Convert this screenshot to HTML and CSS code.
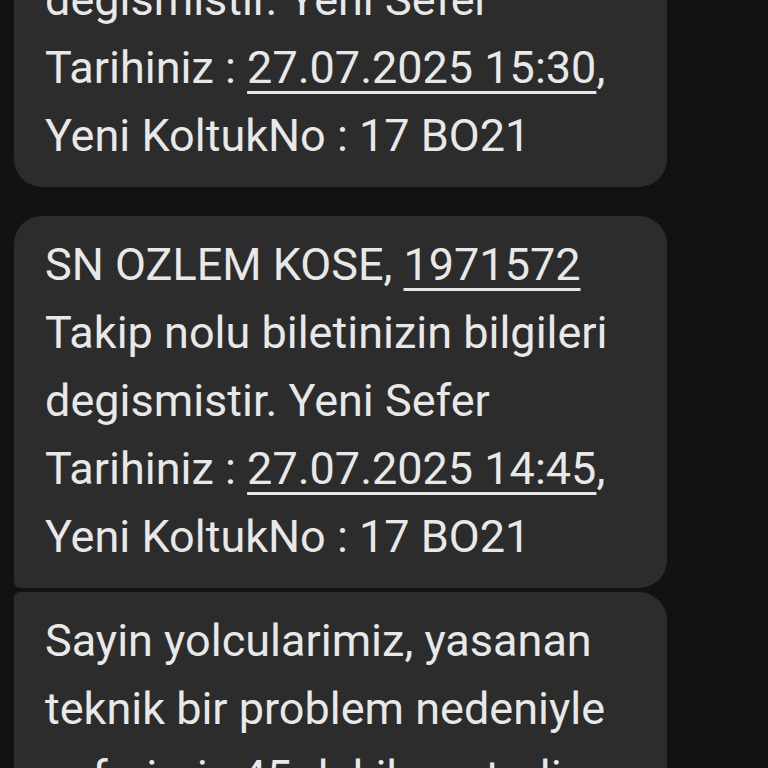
FILE: index.html
```html
<!DOCTYPE html>
<html lang="tr">
<head>
    <meta charset="UTF-8">
    <meta name="viewport" content="width=device-width, initial-scale=1.0">
    <title>Mesajlar</title>
    <link rel="stylesheet" href="styles.css">
</head>
<body>

    <div class="thread">
        <div class="message single">
            SN OZLEM KOSE, <a class="link">1971572</a><br>
            Takip nolu biletinizin bilgileri<br>
            degismistir. Yeni Sefer<br>
            Tarihiniz : <a class="link">27.07.2025 15:30</a>,<br>
            Yeni KoltukNo : 17 BO21
        </div>

        <div class="message first">
            SN OZLEM KOSE, <a class="link">1971572</a><br>
            Takip nolu biletinizin bilgileri<br>
            degismistir. Yeni Sefer<br>
            Tarihiniz : <a class="link">27.07.2025 14:45</a>,<br>
            Yeni KoltukNo : 17 BO21
        </div>

        <div class="message last">
            Sayin yolcularimiz, yasanan<br>
            teknik bir problem nedeniyle<br>
            seferimiz 45 dakika rotarli<br>
            olarak hareket edecektir.
        </div>
    </div>

</body>
</html>
```

FILE: styles.css
```css
body {
    font-family: Roboto, "Noto Sans", Arial, sans-serif;
    background-color: #121212;
    color: #e8e8e8;
    margin: 0;
    padding: 0 14px;
    height: 768px;
    overflow: hidden;
}
.thread {
    margin-top: -185px;
    display: flex;
    flex-direction: column;
}
.message {
    width: 653px;
    box-sizing: border-box;
    background-color: #2c2c2c;
    padding: 15px 20px 17px 31px;
    font-size: 45px;
    line-height: 68px;
    border-radius: 28px;
    white-space: nowrap;
}
.message.single {
    margin-bottom: 29px;
}
.message.first {
    border-bottom-left-radius: 6px;
    margin-bottom: 4px;
}
.message.last {
    border-top-left-radius: 6px;
}
.link {
    color: inherit;
    text-decoration: underline;
    text-decoration-thickness: 3px;
    text-underline-offset: 8px;
}
```
